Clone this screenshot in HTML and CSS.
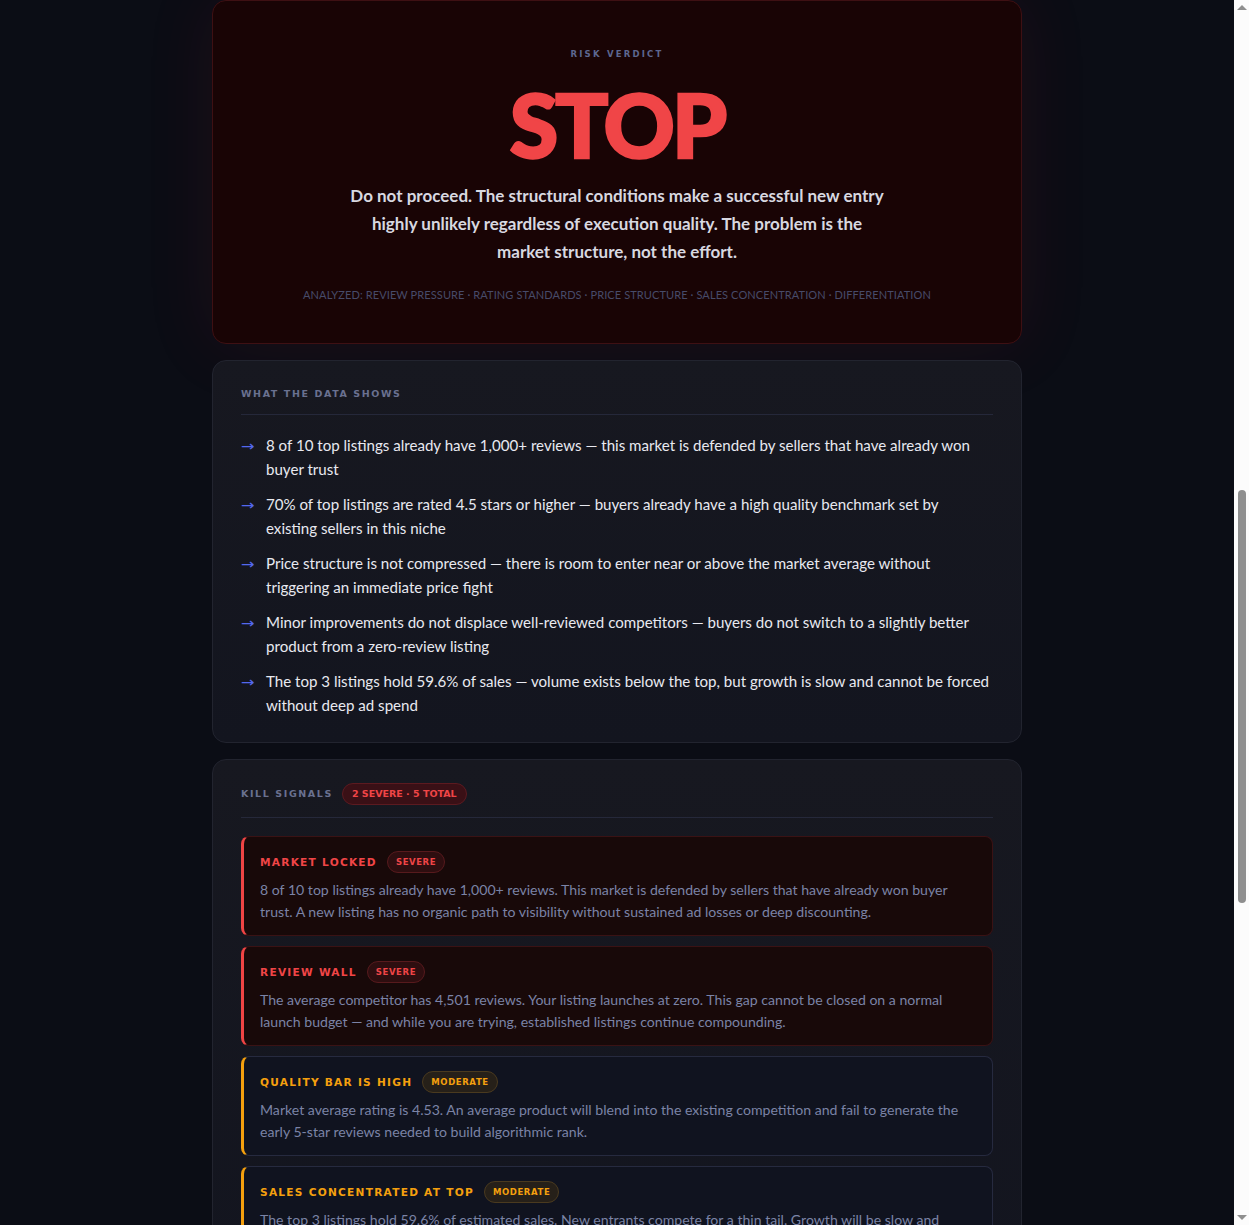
FILE: index.html
```html
<!DOCTYPE html>
<html lang="en">
<head>
<meta charset="utf-8">
<title>Risk Verdict</title>
<link rel="stylesheet" href="styles.css">
</head>
<body>
<main class="page">
  <section class="verdict">
    <div class="verdict-label">RISK VERDICT</div>
    <h1 class="verdict-word">STOP</h1>
    <p class="verdict-text">Do not proceed. The structural conditions make a successful new entry highly unlikely regardless of execution quality. The problem is the market structure, not the effort.</p>
    <div class="verdict-analyzed">ANALYZED: REVIEW PRESSURE · RATING STANDARDS · PRICE STRUCTURE · SALES CONCENTRATION · DIFFERENTIATION</div>
  </section>

  <section class="panel">
    <div class="panel-head">
      <span class="panel-title">WHAT THE DATA SHOWS</span>
    </div>
    <ul class="facts">
      <li><span class="arrow">→</span><span>8 of 10 top listings already have 1,000+ reviews — this market is defended by sellers that have already won buyer trust</span></li>
      <li><span class="arrow">→</span><span>70% of top listings are rated 4.5 stars or higher — buyers already have a high quality benchmark set by existing sellers in this niche</span></li>
      <li><span class="arrow">→</span><span>Price structure is not compressed — there is room to enter near or above the market average without triggering an immediate price fight</span></li>
      <li><span class="arrow">→</span><span>Minor improvements do not displace well-reviewed competitors — buyers do not switch to a slightly better product from a zero-review listing</span></li>
      <li><span class="arrow">→</span><span>The top 3 listings hold 59.6% of sales — volume exists below the top, but growth is slow and cannot be forced without deep ad spend</span></li>
    </ul>
  </section>

  <section class="panel panel-kill">
    <div class="panel-head">
      <span class="panel-title">KILL SIGNALS</span>
      <span class="count-badge">2 SEVERE · 5 TOTAL</span>
    </div>
    <div class="signals">
      <article class="signal severe">
        <div class="signal-head">
          <span class="signal-title">MARKET LOCKED</span>
          <span class="tag">SEVERE</span>
        </div>
        <p class="signal-text">8 of 10 top listings already have 1,000+ reviews. This market is defended by sellers that have already won buyer trust. A new listing has no organic path to visibility without sustained ad losses or deep discounting.</p>
      </article>
      <article class="signal severe">
        <div class="signal-head">
          <span class="signal-title">REVIEW WALL</span>
          <span class="tag">SEVERE</span>
        </div>
        <p class="signal-text">The average competitor has 4,501 reviews. Your listing launches at zero. This gap cannot be closed on a normal launch budget — and while you are trying, established listings continue compounding.</p>
      </article>
      <article class="signal moderate">
        <div class="signal-head">
          <span class="signal-title">QUALITY BAR IS HIGH</span>
          <span class="tag">MODERATE</span>
        </div>
        <p class="signal-text">Market average rating is 4.53. An average product will blend into the existing competition and fail to generate the early 5-star reviews needed to build algorithmic rank.</p>
      </article>
      <article class="signal moderate">
        <div class="signal-head">
          <span class="signal-title">SALES CONCENTRATED AT TOP</span>
          <span class="tag">MODERATE</span>
        </div>
        <p class="signal-text">The top 3 listings hold 59.6% of estimated sales. New entrants compete for a thin tail. Growth will be slow and expensive without sustained advertising.</p>
      </article>
    </div>
  </section>
</main>

<div class="scrollbar" aria-hidden="true">
  <span class="sb-arrow sb-up"></span>
  <span class="sb-thumb"></span>
  <span class="sb-arrow sb-down"></span>
</div>
</body>
</html>
```

FILE: styles.css
```css
* { box-sizing: border-box; }

html, body {
  margin: 0;
  padding: 0;
  background: #0b0d15;
}

body {
  font-family: "Lato", "Noto Sans", sans-serif;
  color: #e4e6ee;
  padding-right: 15px;
}

.page {
  width: 810px;
  margin: 0 auto;
  padding: 0 0 40px;
  display: flex;
  flex-direction: column;
  gap: 16px;
}

/* Verdict card */
.verdict {
  background: #190405;
  border: 1px solid #3e1013;
  border-radius: 14px;
  padding: 46px 40px 40px;
  text-align: center;
  box-shadow: 0 0 70px rgba(200, 30, 40, 0.10);
}

.verdict-label {
  font-family: "DejaVu Sans", sans-serif;
  font-size: 8.5px;
  line-height: 14px;
  font-weight: 700;
  letter-spacing: 2.2px;
  color: #5d6790;
}

.verdict-word {
  margin: 19px 0 0;
  font-family: "Lato", sans-serif;
  font-weight: 900;
  font-size: 88px;
  line-height: 88px;
  letter-spacing: -3px;
  color: #f04547;
  -webkit-text-stroke: 2.5px #f04547;
}

.verdict-text {
  margin: 14px auto 0;
  max-width: 540px;
  font-size: 17px;
  line-height: 28px;
  font-weight: 700;
  color: #d8d8e0;
}

.verdict-analyzed {
  margin-top: 21px;
  font-size: 11px;
  line-height: 16px;
  color: #474b69;
  letter-spacing: 0.1px;
}

/* Panels */
.panel {
  background: linear-gradient(180deg, #171820 0%, #13151f 100%);
  border: 1px solid #22242f;
  border-radius: 14px;
  padding: 26px 28px 25px;
}

.panel-kill {
  padding-top: 23px;
}

.panel-head {
  display: flex;
  align-items: center;
  gap: 11px;
  min-height: 14px;
  padding-bottom: 13px;
  border-bottom: 1px solid #25283a;
}

.panel-kill .panel-head {
  padding-bottom: 12px;
  gap: 9px;
}

.panel-title {
  font-family: "DejaVu Sans", sans-serif;
  font-size: 9.5px;
  line-height: 14px;
  font-weight: 700;
  letter-spacing: 1.6px;
  color: #6a7190;
}

.count-badge {
  font-family: "DejaVu Sans", sans-serif;
  font-size: 9.5px;
  font-weight: 700;
  line-height: 20px;
  padding: 0 9px;
  border-radius: 12px;
  background: #3a1016;
  border: 1px solid #5c1a20;
  color: #f04547;
}

/* Facts list */
.facts {
  list-style: none;
  margin: 18px 0 0;
  padding: 0;
  display: flex;
  flex-direction: column;
  gap: 11px;
}

.facts li {
  display: flex;
  gap: 12px;
  font-size: 15.1px;
  line-height: 24px;
  color: #e8e9f0;
}

.arrow {
  flex: none;
  width: 13px;
  color: #5468ee;
  font-family: "DejaVu Sans", sans-serif;
  font-size: 14px;
  line-height: 24px;
  padding-top: 1px;
  transform: scaleX(1.15);
  transform-origin: left center;
}

/* Kill signals */
.signals {
  margin-top: 18px;
  display: flex;
  flex-direction: column;
  gap: 10px;
}

.signal {
  border-radius: 8px;
  padding: 14px 16px 13px 16px;
  border: 1px solid;
  border-left-width: 3px;
}

.signal.severe {
  background: #180909;
  border-color: #3a1214;
  border-left-color: #ef4444;
}

.signal.moderate {
  background: #10131f;
  border-color: #262a3f;
  border-left-color: #f5a00e;
}

.signal-head {
  display: flex;
  align-items: center;
  gap: 10px;
}

.signal-title {
  font-family: "DejaVu Sans", sans-serif;
  font-size: 10.6px;
  font-weight: 700;
  letter-spacing: 1.25px;
}

.severe .signal-title { color: #f04547; }
.moderate .signal-title { color: #f5a00e; }

.tag {
  font-family: "DejaVu Sans", sans-serif;
  font-size: 8.5px;
  font-weight: 700;
  letter-spacing: 0.6px;
  line-height: 20px;
  padding: 0 8px;
  border-radius: 11px;
  border: 1px solid;
}

.severe .tag {
  background: #2e0e10;
  border-color: #571a1d;
  color: #f04547;
}

.moderate .tag {
  background: #262019;
  border-color: #4a3a1f;
  color: #f5a00e;
}

.signal-text {
  margin: 6px 0 0;
  font-family: "Lato", sans-serif;
  font-size: 14.1px;
  line-height: 21.5px;
  color: #7b83a6;
}

/* Browser scrollbar (as seen in the capture) */
.scrollbar {
  position: fixed;
  top: 0;
  right: 0;
  width: 15px;
  height: 100vh;
  background: #fcfcfc;
}

.sb-thumb {
  position: absolute;
  left: 4px;
  top: 490px;
  width: 8px;
  height: 413px;
  border-radius: 4px;
  background: #8f8f8f;
}

.sb-arrow {
  position: absolute;
  left: 3px;
  width: 0;
  height: 0;
  border-left: 5px solid transparent;
  border-right: 5px solid transparent;
}

.sb-up {
  top: 5px;
  border-bottom: 5px solid #8f8f8f;
}

.sb-down {
  bottom: 5px;
  border-top: 5px solid #8f8f8f;
}
```
